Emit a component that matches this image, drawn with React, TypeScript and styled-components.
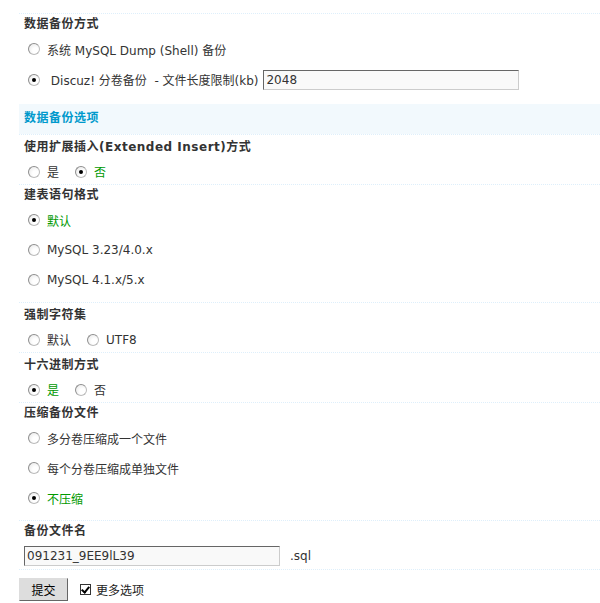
import styled, { createGlobalStyle } from 'styled-components'

const GlobalStyle = createGlobalStyle`
	html, body {
		margin: 0;
		padding: 0;
		background: #fff;
	}
	body {
		font: 12px "DejaVu Sans", "Noto Sans CJK SC", sans-serif;
		color: #333;
	}
`

type Option = { label: string; checked?: boolean }

const tableOptions: Option[] = [
	{ label: '默认', checked: true },
	{ label: 'MySQL 3.23/4.0.x' },
	{ label: 'MySQL 4.1.x/5.x' },
]

const zipOptions: Option[] = [
	{ label: '多分卷压缩成一个文件' },
	{ label: '每个分卷压缩成单独文件' },
	{ label: '不压缩', checked: true },
]

function RadioItem({ label, checked }: Option) {
	return (
		<Label>
			<Radio type="radio" defaultChecked={checked} readOnly />
			<LabelText $checked={checked}>{label}</LabelText>
		</Label>
	)
}

function InlineBlock({ title, options }: { title: string; options: Option[] }) {
	return (
		<Block>
			<Heading $inline>{title}</Heading>
			<InlineRow>
				{options.map((o) => (
					<RadioItem key={o.label} {...o} />
				))}
			</InlineRow>
		</Block>
	)
}

function App() {
	return (
		<Page>
			<GlobalStyle />
			<Block>
				<Heading>数据备份方式</Heading>
				<List $bottom={9}>
					<Row>
						<RadioItem label="系统 MySQL Dump (Shell) 备份" />
					</Row>
					<Row $tall>
						<Label>
							<Radio type="radio" defaultChecked readOnly />
							<LabelText>&nbsp;Discuz! 分卷备份 &nbsp;- 文件长度限制(kb)</LabelText>
						</Label>
						<TextInput $offset={5} defaultValue="2048" />
					</Row>
				</List>
			</Block>

			<Band>数据备份选项</Band>

			<InlineBlock
				title="使用扩展插入(Extended Insert)方式"
				options={[{ label: '是' }, { label: '否', checked: true }]}
			/>

			<Block>
				<Heading>建表语句格式</Heading>
				<List>
					{tableOptions.map((o) => (
						<Row key={o.label}>
							<RadioItem {...o} />
						</Row>
					))}
				</List>
			</Block>

			<InlineBlock
				title="强制字符集"
				options={[{ label: '默认' }, { label: 'UTF8' }]}
			/>

			<InlineBlock
				title="十六进制方式"
				options={[{ label: '是', checked: true }, { label: '否' }]}
			/>

			<Block>
				<Heading>压缩备份文件</Heading>
				<List>
					{zipOptions.map((o) => (
						<Row key={o.label}>
							<RadioItem {...o} />
						</Row>
					))}
				</List>
			</Block>

			<Block>
				<Heading>备份文件名</Heading>
				<FileRow>
					<TextInput defaultValue="091231_9EE9lL39" />
					<span>.sql</span>
				</FileRow>
			</Block>

			<Footer>
				<Button type="button">提交</Button>
				<CheckLabel>
					<Check type="checkbox" defaultChecked readOnly />
					更多选项
				</CheckLabel>
			</Footer>
		</Page>
	)
}

const Page = styled.div`
	padding: 13px 0 0 19px;
	height: 590px;
	overflow: hidden;
`

const Block = styled.div`
	border-top: 1px dotted #deeffb;
	padding: 0 5px;
`

const Heading = styled.div<{ $inline?: boolean }>`
	font-weight: bold;
	line-height: 18px;
	letter-spacing: 0.5px;
	padding-top: ${(p) => (p.$inline ? '3px' : '1px')};
	margin-bottom: ${(p) => (p.$inline ? '-1px' : '-1px')};
	white-space: nowrap;
`

const List = styled.div<{ $bottom?: number }>`
	display: flex;
	flex-direction: column;
	margin-top: 2px;
	padding-bottom: ${(p) => p.$bottom ?? 7}px;
`

const Row = styled.div<{ $tall?: boolean }>`
	display: flex;
	align-items: center;
	height: ${(p) => (p.$tall ? 31 : 30)}px;
	padding-left: 4px;
	white-space: nowrap;
`

const InlineRow = styled.div`
	display: flex;
	align-items: center;
	gap: 16px;
	height: 25px;
	margin-top: 4px;
	padding-left: 4px;
`

const Label = styled.label`
	display: flex;
	align-items: center;
	white-space: nowrap;
`

const LabelText = styled.span<{ $checked?: boolean }>`
	color: ${(p) => (p.$checked ? '#090' : '#333')};
`

const Radio = styled.input`
	appearance: none;
	width: 12px;
	height: 12px;
	margin: 0 7px 0 0;
	border-radius: 50%;
	border: 1px solid #bbb;
	border-top-color: #8e8e8e;
	border-left-color: #8e8e8e;
	background: radial-gradient(circle at 65% 65%, #fff 30%, #e4e4e4 100%);
	position: relative;
	box-sizing: border-box;

	&:checked::after {
		content: '';
		position: absolute;
		left: 3px;
		top: 3px;
		width: 4px;
		height: 4px;
		border-radius: 50%;
		background: #000;
	}
`

const TextInput = styled.input<{ $offset?: number }>`
	box-sizing: border-box;
	width: 256px;
	height: 20px;
	padding: 0 2px;
	margin: 0 0 0 ${(p) => p.$offset ?? 0}px;
	border: 1px solid;
	border-color: #666 #ccc #ccc #666;
	background: #f9f9f9;
	font: 12px "DejaVu Sans", "Noto Sans CJK SC", sans-serif;
	color: #333;
	outline: none;
`

const Band = styled.div`
	height: 30px;
	line-height: 28px;
	padding: 0 5px;
	background: #f2f9fd;
	color: #09c;
	font-weight: bold;
	letter-spacing: 0.5px;
`

const FileRow = styled.div`
	display: flex;
	align-items: center;
	gap: 10px;
	height: 20px;
	margin-top: 7px;
	padding-bottom: 3px;
`

const Footer = styled.div`
	border-top: 1px dotted #deeffb;
	display: flex;
	align-items: center;
	gap: 12px;
	padding-top: 8px;
`

const Button = styled.button`
	box-sizing: border-box;
	width: 49px;
	height: 23px;
	padding: 0;
	border: 1px solid;
	border-color: #ddd #666 #666 #ddd;
	background: #ddd;
	font: 12px "Noto Sans CJK SC", sans-serif;
	color: #000;
`

const CheckLabel = styled.label`
	display: flex;
	align-items: center;
	gap: 5px;
	color: #222;
`

const Check = styled.input`
	appearance: none;
	width: 11px;
	height: 11px;
	margin: 0;
	box-sizing: border-box;
	border: 1px solid #333;
	background: #fff;
	position: relative;

	&:checked::after {
		content: '';
		position: absolute;
		left: 2px;
		top: 0px;
		width: 3px;
		height: 6px;
		border: solid #000;
		border-width: 0 2px 2px 0;
		transform: rotate(40deg);
	}
`

export default App
